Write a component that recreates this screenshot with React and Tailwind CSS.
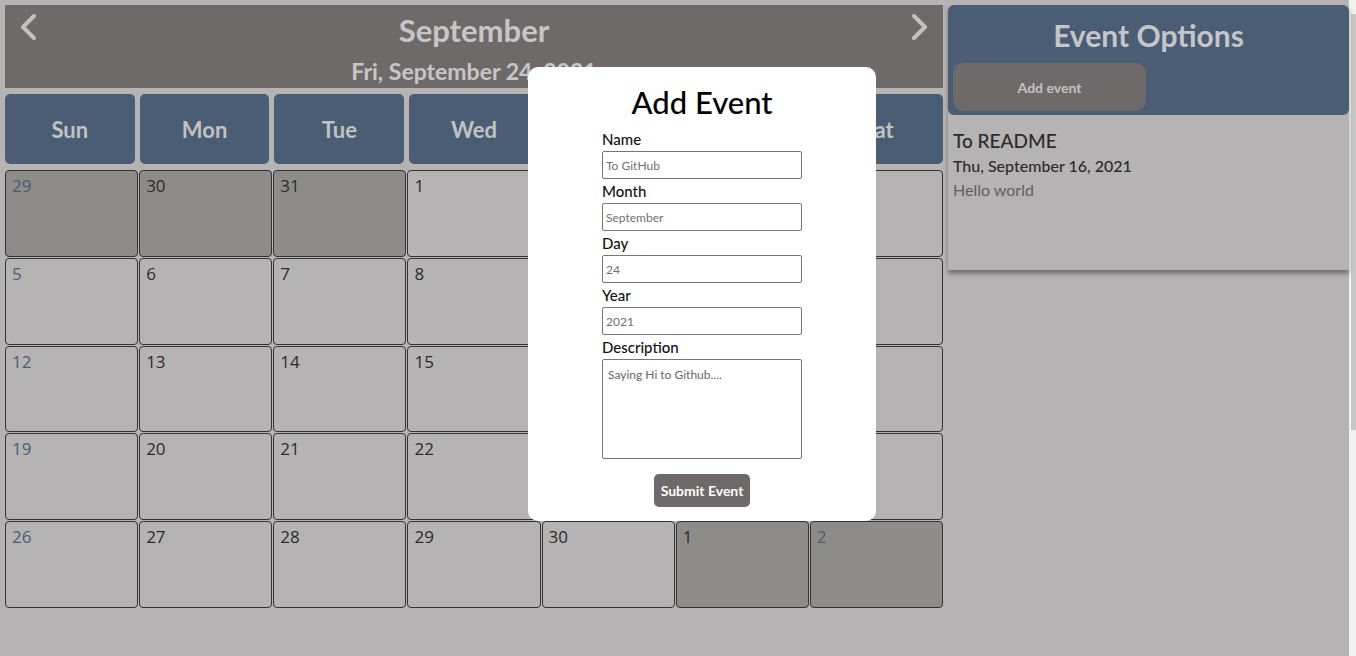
import React from "react";

const weeks = [
  [
    { d: 29, out: true },
    { d: 30, out: true },
    { d: 31, out: true },
    { d: 1 },
    { d: 2 },
    { d: 3 },
    { d: 4 },
  ],
  [{ d: 5 }, { d: 6 }, { d: 7 }, { d: 8 }, { d: 9 }, { d: 10 }, { d: 11 }],
  [{ d: 12 }, { d: 13 }, { d: 14 }, { d: 15 }, { d: 16 }, { d: 17 }, { d: 18 }],
  [{ d: 19 }, { d: 20 }, { d: 21 }, { d: 22 }, { d: 23 }, { d: 24 }, { d: 25 }],
  [
    { d: 26 },
    { d: 27 },
    { d: 28 },
    { d: 29 },
    { d: 30 },
    { d: 1, out: true },
    { d: 2, out: true },
  ],
];

const dayNames = ["Sun", "Mon", "Tue", "Wed", "Thu", "Fri", "Sat"];

const Chevron = ({ dir }) => (
  <svg width="16" height="28" viewBox="0 0 16 28" className="mt-[1px] shrink-0">
    <polyline
      points={dir === "left" ? "14,3 3,14 14,25" : "2,3 13,14 2,25"}
      fill="none"
      stroke="#c4c1c1"
      strokeWidth="4"
      strokeLinecap="round"
      strokeLinejoin="round"
    />
  </svg>
);

const Field = ({ label, placeholder }) => (
  <div className="flex flex-col">
    <label className="text-[15px] leading-[24px] font-medium text-[#111]">{label}</label>
    <input
      placeholder={placeholder}
      className="h-[28px] w-[200px] rounded-[2px] border border-[#767676] bg-white px-[3px] text-[12px] text-[#333] placeholder:text-[#707070] outline-none"
    />
  </div>
);

const App = () => {
  return (
    <div
      className="flex h-screen overflow-hidden bg-[#b5b3b4]"
      style={{ fontFamily: "Lato, 'Noto Sans', sans-serif" }}
    >
      <div className="relative min-h-[1000px] flex-1">
        <div className="flex gap-[5px] pl-[5px] pt-[5px]">
          {/* calendar */}
          <div className="w-[938px] shrink-0">
            <div className="flex h-[83px] items-start bg-[#6e6a6a] px-[15px] pt-[7px]">
              <Chevron dir="left" />
              <div className="flex-1 text-center text-[#c9c5c5] font-bold">
                <h1 className="text-[31px] leading-[36px]">September</h1>
                <h2 className="mt-[10px] text-[23px] leading-[26px]">Fri, September 24, 2021</h2>
              </div>
              <Chevron dir="right" />
            </div>

            <div className="mt-[6px] grid grid-cols-7 gap-[5px]">
              {dayNames.map((n) => (
                <div
                  key={n}
                  className="flex h-[70px] items-center justify-center rounded-[5px] bg-[#4a5d74] text-[22px] font-bold text-[#c2c2c2]"
                >
                  {n}
                </div>
              ))}
            </div>

            <div className="mt-[6px] grid grid-cols-7 gap-px">
              {weeks.map((week, wi) =>
                week.map((c, ci) => (
                  <div
                    key={wi + "-" + ci}
                    className={`h-[86.8px] rounded-[4px] border border-[#333] px-[6px] pt-[3px] ${
                      c.out ? "bg-[#8e8c89]" : "bg-[#b5b3b4]"
                    }`}
                  >
                    <span
                      className={`text-[17px] leading-[23px] ${
                        ci === 0 || ci === 6 ? "text-[#4a5d74]" : "text-[#2d2a2a]"
                      }`}
                      style={{ fontFamily: "'Open Sans', sans-serif" }}
                    >
                      {c.d}
                    </span>
                  </div>
                ))
              )}
            </div>
          </div>

          {/* event options */}
          <div className="flex h-[265px] flex-1 flex-col shadow-[0_4px_4px_rgba(0,0,0,0.35)]">
            <div className="h-[110px] rounded-[6px] bg-[#4a5d74] pt-[10px]">
              <h2 className="text-center text-[30px] leading-[40px] font-bold text-[#c4c6ca]">Event Options</h2>
              <button className="ml-[5px] mt-[8px] h-[48px] w-[193px] rounded-[10px] bg-[#6e6a6a] text-[14px] font-bold text-[#c4c1c1]">
                Add event
              </button>
            </div>
            <div className="px-[5px] pt-[13px]">
              <p className="text-[19px] leading-[26px] font-medium text-[#2d2a2a]">To README</p>
              <p className="text-[16px] leading-[24px] font-medium text-[#2d2a2a]">Thu, September 16, 2021</p>
              <p className="text-[16px] leading-[24px] text-[#625e5e]">Hello world</p>
            </div>
          </div>
        </div>

        {/* modal */}
        <div className="absolute left-[528px] top-[67px] flex w-[348px] flex-col items-center rounded-[10px] bg-white pb-[14px] pt-[15px]">
          <h2 className="text-[31px] leading-[40px] font-medium text-black">Add Event</h2>
          <div className="mt-[5px] flex flex-col">
            <Field label="Name" placeholder="To GitHub" />
            <Field label="Month" placeholder="September" />
            <Field label="Day" placeholder="24" />
            <Field label="Year" placeholder="2021" />
            <label className="text-[15px] leading-[24px] font-medium text-[#111]">Description</label>
            <textarea
              defaultValue="Saying Hi to Github...."
              className="h-[100px] w-[200px] resize-none rounded-[2px] border border-[#767676] px-[5px] py-[6px] text-[12px] text-[#666] outline-none"
            />
          </div>
          <button className="mt-[15px] h-[33px] w-[96px] rounded-[5px] bg-[#6e6a6a] text-[14px] font-bold text-white">
            Submit Event
          </button>
        </div>
      </div>

      {/* scrollbar */}
      <div className="w-[7px] shrink-0 bg-[#f1f1f1] pl-[2px] pt-[14px]">
        <div className="h-[416px] bg-[#c6c6c6]" />
      </div>
    </div>
  );
};

export default App;
